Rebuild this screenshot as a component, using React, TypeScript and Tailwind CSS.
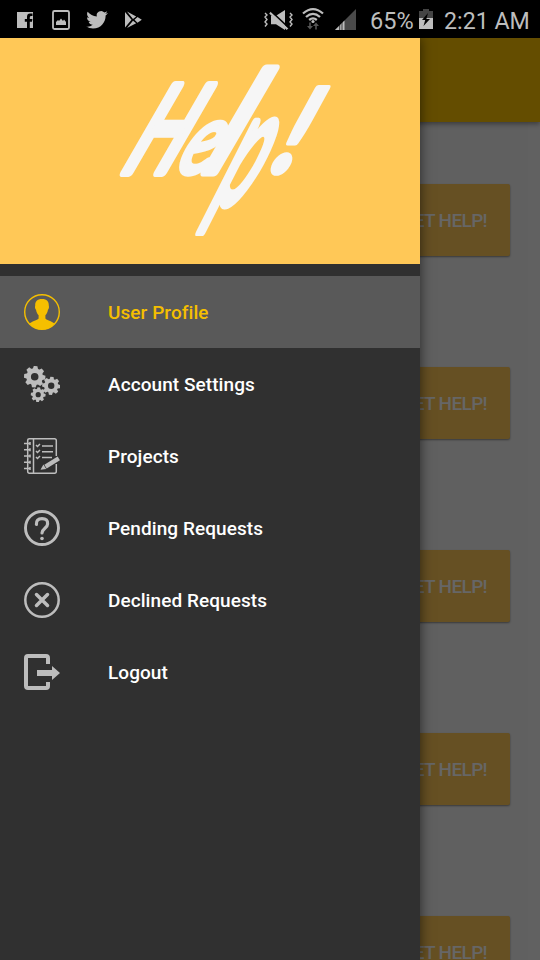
import React from 'react';

const G = '#bdbdbd';

function StatusBar() {
  return (
    <div className="relative z-20 flex h-[38px] items-center bg-black text-[#bdbdbd]">
      <svg width="360" height="38" viewBox="0 0 360 38" fill="#bdbdbd" className="shrink-0">
        <path fillRule="evenodd" d="M17 12H33V28H29.8V21.8H32L32.4 19H29.8V17.3Q29.8 16 31.2 16H32.5V13.6H30Q27 13.6 27 17V19H24.8V21.8H27V28H17Z" />
        <rect x="53" y="11" width="16" height="18" rx="1.5" fill="none" stroke={G} strokeWidth="1.8" />
        <path d="M56 25V22L58 20 59 21 61 18.5 63 21 64 19.5 66 22V25Z" />
        <g transform="translate(86.2 9) scale(.9)">
          <path d="M23.95 4.57a10 10 0 01-2.82.77 4.96 4.96 0 002.16-2.72c-.95.55-2 .96-3.13 1.18a4.92 4.92 0 00-8.38 4.48C7.69 8.1 4.07 6.13 1.64 3.16a4.82 4.82 0 00-.67 2.48c0 1.71.87 3.21 2.19 4.1a4.9 4.9 0 01-2.23-.62v.06a4.92 4.92 0 003.95 4.83 5 5 0 01-2.21.08 4.94 4.94 0 004.6 3.42A9.87 9.87 0 010 19.54a14 14 0 007.55 2.21c9.05 0 14-7.5 14-13.98 0-.21 0-.42-.02-.63a9.94 9.94 0 002.46-2.55z" />
        </g>
        <path d="M125 12L131.5 19.7 125 27.5ZM127 11.5L136.2 16.4 133 19ZM127 28L133 20.7 136.2 23.3ZM134.5 19.8L137.5 17 141.8 19.8 137.5 22.8Z" />
        <path d="M271 15.7H276L285 10V30L276 24.3H271Z" />
        <path d="M270 12.7L287.5 29.2" stroke={G} strokeWidth="2.4" />
        <path d="M271.5 11.5L288.5 27.5" stroke="#000" strokeWidth="1.6" />
        <path d="M265 13l2 2-2 2 2 2.5-2 2.5 2 2-2 2.5M290 13l2 2-2 2 2 2.5-2 2.5 2 2-2 2.5" fill="none" stroke={G} strokeWidth="1.4" />
        <g fill="none" stroke={G} strokeWidth="2.3">
          <path d="M303 13.5Q313 4.7 323 13.5M306 17Q313 10.7 320 17M309.2 20Q313 16.8 316.8 20" />
        </g>
        <circle cx="313" cy="21.5" r="1.6" />
        <path d="M309.2 22.5H310.8V26H313L310 29.5 307 26H309.2ZM315.2 29.5H316.8V26H319L316 22.5 313 26H315.2Z" fill="#555" />
        <path d="M335 30L356 9V30Z" fill="#4a4a4a" />
        <path d="M335 30L344.5 20.5V30Z" />
        <path d="M339.7 24V30M342 22V30" stroke="#000" strokeWidth=".7" />
      </svg>
      <span className="ml-[10px] w-[49px] whitespace-nowrap pt-[3px] font-[Roboto,sans-serif] text-[23.5px] leading-[30px]">65%</span>
      <svg width="14" height="22" viewBox="0 0 14 22" className="shrink-0">
        <path d="M4 1H10V3H14V21H0V3H4Z" fill="#444" />
        <path d="M0 10H14V21H0Z" fill={G} />
        <path d="M9 5L3 12H6.2L4.5 18 11 11H7.4Z" fill="#000" />
      </svg>
      <span className="ml-[11px] whitespace-nowrap pt-[3px] font-[Roboto,sans-serif] text-[23.2px] leading-[30px]">2:21 AM</span>
    </div>
  );
}

function UserIcon() {
  return (
    <svg width="36" height="36" viewBox="0 0 36 36" fill="#f5bf00">
      <circle cx="18" cy="18" r="17.3" fill="none" stroke="#f5bf00" strokeWidth="1.4" />
      <path d="M18 5C22.9 5 24.9 7.6 24.8 11.5C25.3 13 24.9 15 23.9 16C23.5 18.5 22.7 20 21.4 21.2V24.5C23 26.5 27.5 27 30.5 29.5Q25.5 35.5 18 35.5T5.5 29.5C8.5 27 13 26.5 14.6 24.5V21.2C13.3 20 12.5 18.5 12.1 16C11.1 15 10.7 13 11.2 11.5C11.1 7.6 13.1 5 18 5Z" />
    </svg>
  );
}

function Gear({ x, y, s }: { x: number; y: number; s: number }) {
  return (
    <g transform={`translate(${x} ${y}) scale(${s})`}>
      <circle r="6.3" fill="none" stroke="#bdbdbd" strokeWidth="4.8" />
      {[0, 45, 90, 135, 180, 225, 270, 315].map((a) => (
        <path key={a} d="M-2.8-7.5L-1.9-11H1.9L2.8-7.5Z" fill="#bdbdbd" transform={`rotate(${a + 5})`} />
      ))}
    </g>
  );
}

function GearsIcon() {
  return (
    <svg width="36" height="36" viewBox="0 0 36 36">
      <Gear x={10.7} y={10.7} s={0.97} />
      <Gear x={27.2} y={19.8} s={0.82} />
      <Gear x={14.2} y={28.7} s={0.67} />
    </svg>
  );
}

function ProjectsIcon() {
  return (
    <svg width="36" height="36" viewBox="0 0 36 36" fill="none" stroke="#bdbdbd" strokeWidth="1.5">
      <path d="M32.3 18V2.5Q32.3.8 30.5.8H5.5Q3.7.8 3.7 2.5V33.5Q3.7 35.2 5.5 35.2H30.5Q32.3 35.2 32.3 33.5V26M9.5 1V35" />
      <path d="M0 5.5H6M0 11.8H6M0 18H6M0 24.3H6M0 30.5H6M6 4V7M6 10.3V13.3M6 16.5V19.5M6 22.8V25.8M6 29V32" />
      <path d="M18 8H29M18 13.7H29M18 19.5H28M12 7L13.5 8.5 16 6M12 13L13.5 14.5 16 12M12 19L13.5 20.5 16 18" />
      <path d="M21.5 28.7L34.8 20.4" strokeWidth="4.4" />
      <path d="M16.5 31.8L19.4 26.5 22.3 31Z" fill="#bdbdbd" stroke="none" />
    </svg>
  );
}

function PendingIcon() {
  return (
    <svg width="36" height="36" viewBox="0 0 36 36" fill="none" stroke="#bdbdbd">
      <circle cx="18" cy="18" r="16.5" strokeWidth="2.9" />
      <path d="M12.4 14.5Q12 8.6 18 8.6T23.6 14C23.6 18 18 18.5 18 23" strokeWidth="3.2" strokeLinecap="round" />
      <circle cx="18" cy="28.5" r="1.8" fill="#bdbdbd" stroke="none" />
    </svg>
  );
}

function DeclinedIcon() {
  return (
    <svg width="36" height="36" viewBox="0 0 36 36" fill="none" stroke="#bdbdbd">
      <circle cx="18" cy="18" r="16.7" strokeWidth="2.5" />
      <path d="M12.5 12.5L23.5 23.5M23.5 12.5L12.5 23.5" strokeWidth="3.5" strokeLinecap="round" />
    </svg>
  );
}

function LogoutIcon() {
  return (
    <svg width="36" height="36" viewBox="0 0 36 36">
      <path d="M24 10V4Q24 2 22 2H4Q2 2 2 4V32Q2 34 4 34H22Q24 34 24 32V28" fill="none" stroke="#bdbdbd" strokeWidth="4" />
      <path d="M13 16H28V12L36 19 28 26V22H13Z" fill="#bdbdbd" />
    </svg>
  );
}

const items = [
  { label: 'User Profile', Icon: UserIcon, active: true },
  { label: 'Account Settings', Icon: GearsIcon },
  { label: 'Projects', Icon: ProjectsIcon },
  { label: 'Pending Requests', Icon: PendingIcon },
  { label: 'Declined Requests', Icon: DeclinedIcon },
  { label: 'Logout', Icon: LogoutIcon },
];

function Wordmark() {
  return (
    <svg width="420" height="226" viewBox="0 38 420 226" fill="#f6f6f6" stroke="#f6f6f6" strokeLinejoin="round" className="font-[Lato,sans-serif] italic">
      <text className="text-[120px]" strokeWidth="10" transform="matrix(.63 0 -.5 1 120 172)">H</text>
      <text className="text-[98px]" strokeWidth="6" transform="matrix(.74 0 -.47 1 174 173)">e</text>
      <text className="text-[140px]" strokeWidth="9" transform="matrix(.85 0 -.48 1 201 172)">l</text>
      <text className="text-[147px]" strokeWidth="8" transform="matrix(.48 0 -.5 1.1 210 204)">p</text>
      <text className="text-[116px] font-bold" strokeWidth="6" transform="matrix(.8 0 -.45 1 268 172)">!</text>
    </svg>
  );
}

export default function App() {
  return (
    <div className="relative flex h-[960px] w-[540px] flex-col overflow-hidden bg-[#616161] font-[Roboto,sans-serif]">
      <StatusBar />
      <div className="z-[1] h-[84px] shrink-0 bg-[#644d00] shadow-[0_2px_5px_rgba(0,0,0,0.4)]" />
      <div className="mr-[12px] flex flex-col items-end gap-[111px] bg-[#606060] pr-[18px] pt-[62px]">
        {[0, 1, 2, 3, 4].map((n) => (
          <div key={n} className="flex h-[72px] w-[138px] shrink-0 items-center justify-end rounded-[2px] bg-[#665023] pr-[23px] pt-[2px] text-[19px] font-medium tracking-[-0.65px] text-[#666666] shadow-[0_1px_2px_rgba(0,0,0,0.4)]">
            GET HELP!
          </div>
        ))}
      </div>
      <aside className="absolute bottom-0 left-0 top-[38px] z-10 flex w-[420px] flex-col bg-[#303030] shadow-[0_0_12px_rgba(0,0,0,0.6)]">
        <div className="h-[226px] shrink-0 bg-[#ffc857]">
          <Wordmark />
        </div>
        <nav className="flex flex-col pt-[12px]">
          {items.map(({ label, Icon, active }) => (
            <div
              key={label}
              className={
                active
                  ? 'flex h-[72px] items-center gap-[48px] bg-[#595959] pl-[24px] text-[19px] font-medium tracking-[0.07px] text-[#f5bf00]'
                  : 'flex h-[72px] items-center gap-[48px] pl-[24px] text-[19px] font-medium tracking-[0.07px] text-white'
              }
            >
              <Icon />
              <span className="pt-[2px]">{label}</span>
            </div>
          ))}
        </nav>
      </aside>
    </div>
  );
}
